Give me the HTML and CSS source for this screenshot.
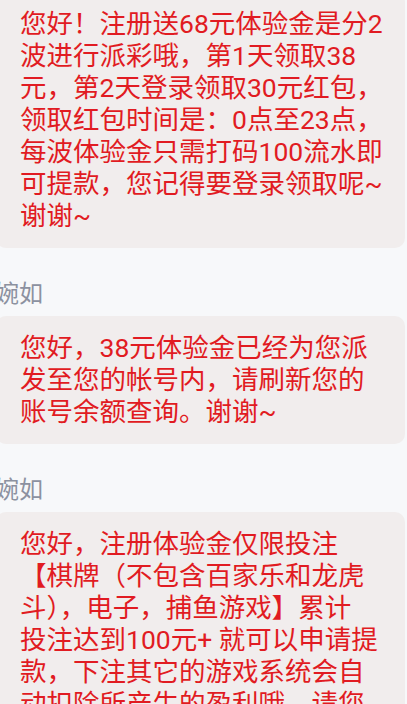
FILE: index.html
```html
<!DOCTYPE html>
<html lang="zh-CN">
  <head>
    <meta charset="UTF-8" />
    <meta name="viewport" content="width=device-width, initial-scale=1.0" />
    <title>客服消息</title>
    <link rel="stylesheet" href="styles.css">
  </head>
  <body>
    <div class="chat">
      <div class="msg msg-first">
        <p class="bubble">您好！注册送68元体验金是分2<br>波进行派彩哦，第1天领取38<br>元，第2天登录领取30元红包，<br>领取红包时间是：0点至23点，<br>每波体验金只需打码100流水即<br>可提款，您记得要登录领取呢~<br>谢谢~</p>
      </div>

      <div class="msg">
        <div class="name">婉如</div>
        <p class="bubble">您好，38元体验金已经为您派<br>发至您的帐号内，请刷新您的<br>账号余额查询。谢谢~</p>
      </div>

      <div class="msg">
        <div class="name">婉如</div>
        <p class="bubble">您好，注册体验金仅限投注<br>【棋牌（不包含百家乐和龙虎<br>斗），电子，捕鱼游戏】累计<br>投注达到100元+ 就可以申请提<br>款，下注其它的游戏系统会自<br>动扣除所产生的盈利哦，请您<br>知悉~谢谢</p>
      </div>
    </div>
  </body>
</html>
```

FILE: styles.css
```css
*,
*::before,
*::after {
  box-sizing: border-box;
}

html,
body {
  margin: 0;
  padding: 0;
  background-color: #f7f8fa;
  overflow: hidden;
}

body {
  font-family: Roboto, "Noto Sans CJK SC", sans-serif;
}

.chat {
  display: flex;
  flex-direction: column;
  margin-left: -4px;
  width: 409px;
}

.msg {
  margin-top: 34px;
}

.msg-first {
  margin-top: -8px;
}

.name {
  margin: 0 0 10px -1px;
  font-size: 24px;
  line-height: 24px;
  color: #8c91a0;
}

.bubble {
  margin: 0;
  padding: 16px 10px 16px 24px;
  background-color: #f1eded;
  border-radius: 10px;
  color: #e11b22;
  font-size: 26.5px;
  line-height: 32px;
  white-space: nowrap;
}
```
